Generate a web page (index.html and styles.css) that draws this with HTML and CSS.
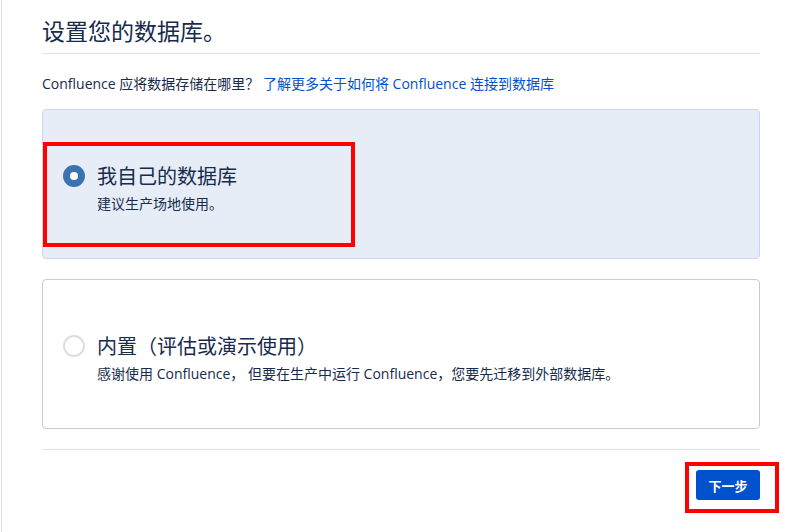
FILE: index.html
```html
<!DOCTYPE html>
<html lang="zh-CN">
<head>
<meta charset="utf-8">
<title>设置您的数据库</title>
<link rel="stylesheet" href="styles.css">
</head>
<body>
<div class="page">
  <h1 class="heading">设置您的数据库。</h1>
  <p class="question">Confluence 应将数据存储在哪里？ <a class="link" href="#">了解更多关于如何将 Confluence 连接到数据库</a></p>

  <div class="options">
    <label class="option option-selected">
      <span class="radio radio-on"></span>
      <span class="option-text">
        <span class="option-title">我自己的数据库</span>
        <span class="option-desc">建议生产场地使用。</span>
      </span>
      <span class="mark mark-option"></span>
    </label>

    <label class="option">
      <span class="radio"></span>
      <span class="option-text">
        <span class="option-title">内置（评估或演示使用）</span>
        <span class="option-desc">感谢使用 Confluence， 但要在生产中运行 Confluence，您要先迁移到外部数据库。</span>
      </span>
    </label>
  </div>

  <div class="footer">
    <button class="btn-primary" type="button">下一步<span class="mark mark-button"></span></button>
  </div>
</div>
</body>
</html>
```

FILE: styles.css
```css
* {
  box-sizing: border-box;
}

html, body {
  margin: 0;
  padding: 0;
  background: #ffffff;
}

body {
  font-family: "Open Sans", "Noto Sans CJK SC", sans-serif;
  color: #172b4d;
  height: 532px;
  overflow: hidden;
}

.page {
  margin-left: 1px;
  border-left: 1px solid #dfe1ea;
  min-height: 532px;
  padding: 16px 27px 0 40px;
}

.heading {
  margin: 0;
  font-family: "Noto Sans CJK SC", sans-serif;
  font-size: 23px;
  font-weight: 400;
  line-height: 28px;
  color: #172b4d;
  padding-bottom: 9px;
  border-bottom: 1px solid #dfe1e6;
}

.question {
  margin: 20px 0 15px;
  font-size: 14px;
  line-height: 20px;
  color: #172b4d;
}

.link {
  color: #0052cc;
  text-decoration: none;
}

.options {
  display: flex;
  flex-direction: column;
  gap: 20px;
}

.option {
  position: relative;
  display: flex;
  align-items: flex-start;
  gap: 12px;
  height: 150px;
  padding: 54px 20px 0 20px;
  border: 1px solid #cccccc;
  border-radius: 4px;
  background: #ffffff;
}

.option-selected {
  background: #e6edf7;
  border-color: #c8d7ec;
}

.radio {
  flex: none;
  width: 22px;
  height: 22px;
  margin-top: 1px;
  border-radius: 50%;
  border: 2px solid #dddddd;
  background: #ffffff;
}

.radio-on {
  border: 7px solid #3b73af;
  background: #ffffff;
}

.option-text {
  display: flex;
  flex-direction: column;
  gap: 6px;
}

.option-title {
  font-family: "Noto Sans CJK SC", sans-serif;
  font-size: 20px;
  line-height: 24px;
  color: #172b4d;
}

.option-desc {
  font-size: 14px;
  line-height: 20px;
  color: #172b4d;
}

.footer {
  margin-top: 20px;
  border-top: 1px solid #dfe1e6;
  padding-top: 20px;
  display: flex;
  justify-content: flex-end;
}

.btn-primary {
  position: relative;
  width: 64px;
  height: 30px;
  border: none;
  border-radius: 3px;
  background: #0052cc;
  color: #ffffff;
  font-family: "Noto Sans CJK SC", sans-serif;
  font-size: 13px;
  font-weight: 700;
  padding: 0;
  cursor: pointer;
}

.mark {
  position: absolute;
  border: 4px solid #ff0000;
  pointer-events: none;
}

.mark-option {
  left: 0;
  top: 32px;
  width: 312px;
  height: 105px;
}

.mark-button {
  left: -11px;
  top: -8px;
  width: 94px;
  height: 51px;
}
```
